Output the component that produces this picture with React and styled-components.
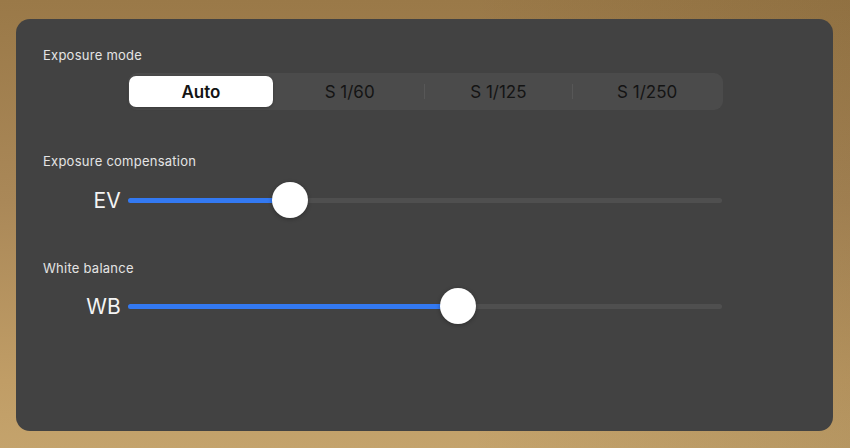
import styled, { createGlobalStyle } from 'styled-components';

const Global = createGlobalStyle`
  html, body {
    margin: 0;
    padding: 0;
  }
  body {
    font-family: Inter, "Noto Sans", "Liberation Sans", sans-serif;
    -webkit-font-smoothing: antialiased;
  }
`;

const Page = styled.div`
  width: 850px;
  height: 448px;
  box-sizing: border-box;
  padding: 19px 17px 17px 16px;
  background:
    linear-gradient(90deg, rgba(0, 0, 0, 0) 55%, rgba(60, 40, 10, 0.1) 100%),
    linear-gradient(180deg, #9a7948 0%, #aa8858 45%, #c09d66 85%, #c4a36c 100%);
`;

const Panel = styled.div`
  height: 100%;
  box-sizing: border-box;
  background: #424242;
  border-radius: 14px;
  padding: 28px 0 0 27px;
`;

const Label = styled.div`
  font-size: 13px;
  line-height: 16px;
  letter-spacing: 0.25px;
  color: #e4e4e4;
  margin-top: ${p => p.$top || 0}px;
`;

const Row = styled.div`
  display: grid;
  grid-template-columns: 78px 595px;
  column-gap: 7px;
  align-items: center;
  margin-top: ${p => p.$top || 0}px;
`;

const RowName = styled.div`
  text-align: right;
  font-size: 21px;
  color: #f4f4f4;
  letter-spacing: 0.2px;
`;

const Segmented = styled.div`
  display: grid;
  grid-template-columns: repeat(4, 1fr);
  height: 37px;
  box-sizing: border-box;
  padding: 3px 0;
  background: #4b4b4b;
  border-radius: 9px;
`;

const Segment = styled.div`
  position: relative;
  display: flex;
  align-items: center;
  justify-content: center;
  margin: 0 4px 0 1px;
  border-radius: 7px;
  font-size: 17px;
  font-weight: ${p => (p.$active ? 600 : 400)};
  color: #141414;
  background: ${p => (p.$active ? '#ffffff' : 'transparent')};
  box-shadow: ${p => (p.$active ? '0 1px 3px rgba(0,0,0,0.25)' : 'none')};
`;

const Divider = styled.span`
  position: absolute;
  left: -3px;
  top: 8px;
  bottom: 8px;
  width: 1px;
  background: #575757;
`;

const SliderBox = styled.div`
  position: relative;
  height: 36px;
  width: 594px;
`;

const Track = styled.div`
  position: absolute;
  left: 0;
  right: 0;
  top: 16px;
  height: 5px;
  border-radius: 3px;
  background: #4f4f4f;
`;

const Fill = styled.div`
  height: 100%;
  border-radius: 3px;
  background: #3379f2;
`;

const Thumb = styled.div`
  position: absolute;
  top: 0;
  width: 36px;
  height: 36px;
  margin-left: -18px;
  border-radius: 50%;
  background: #ffffff;
  box-shadow: 0 1px 4px rgba(0, 0, 0, 0.3);
`;

const modes = ['Auto', 'S 1/60', 'S 1/125', 'S 1/250'];

const Slider = ({ value }) => (
  <SliderBox>
    <Track>
      <Fill style={{ width: `${value * 100}%` }} />
    </Track>
    <Thumb style={{ left: `${value * 100}%` }} />
  </SliderBox>
);

const App = () => {
  const active = 0;
  return (
    <Page>
      <Global />
      <Panel>
        <Label>Exposure mode</Label>
        <Row $top={10}>
          <span />
          <Segmented>
            {modes.map((m, i) => (
              <Segment key={m} $active={i === active}>
                {i > 0 && i !== active && i - 1 !== active && <Divider />}
                {m}
              </Segment>
            ))}
          </Segmented>
        </Row>

        <Label $top={43}>Exposure compensation</Label>
        <Row $top={13}>
          <RowName>EV</RowName>
          <Slider value={0.272} />
        </Row>

        <Label $top={42}>White balance</Label>
        <Row $top={12}>
          <RowName>WB</RowName>
          <Slider value={0.556} />
        </Row>
      </Panel>
    </Page>
  );
};

export default App;
